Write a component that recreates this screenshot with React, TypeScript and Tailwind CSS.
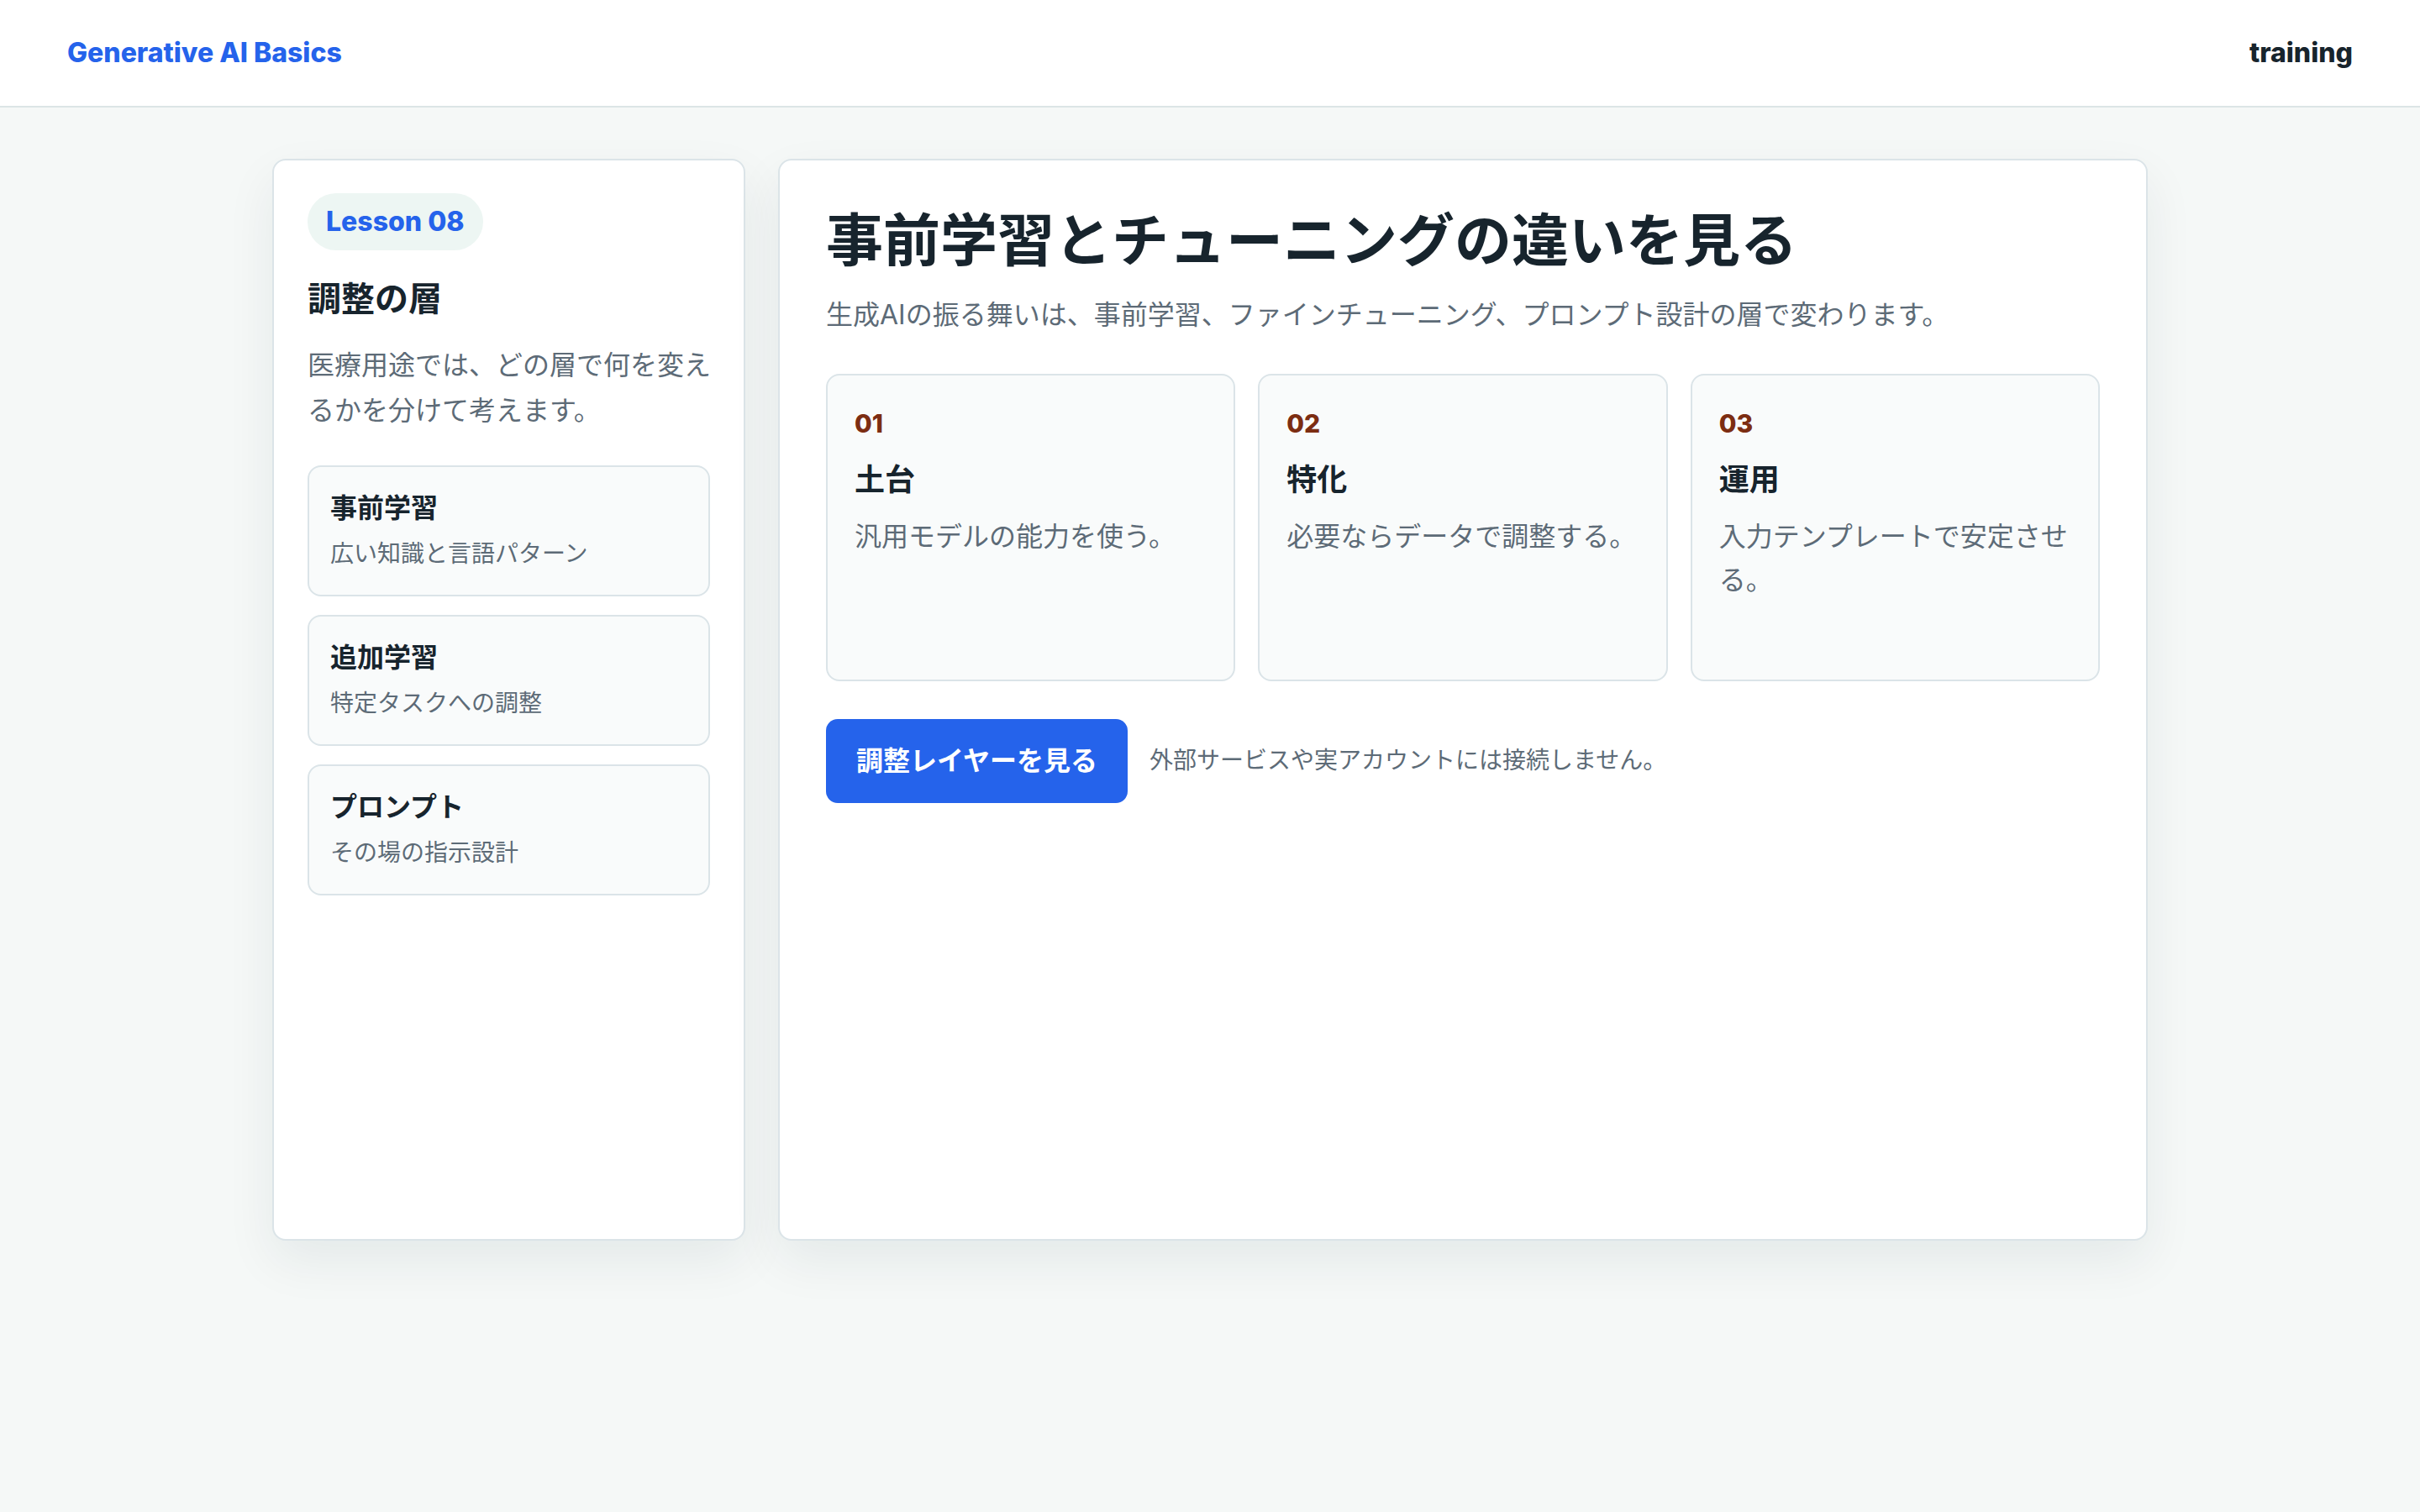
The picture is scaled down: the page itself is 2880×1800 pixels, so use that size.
import React from "react";

const items = [
  { title: "事前学習", sub: "広い知識と言語パターン" },
  { title: "追加学習", sub: "特定タスクへの調整" },
  { title: "プロンプト", sub: "その場の指示設計" },
];

const cards = [
  { num: "01", title: "土台", desc: "汎用モデルの能力を使う。" },
  { num: "02", title: "特化", desc: "必要ならデータで調整する。" },
  { num: "03", title: "運用", desc: "入力テンプレートで安定させる。" },
];

export default function App() {
  return (
    <div className="min-h-screen bg-[#f5f8f7] font-[Inter,'Noto_Sans_CJK_JP',sans-serif] text-[#17242d]">
      <header className="h-[128px] bg-white border-b-2 border-[#dce5e6] flex items-center justify-between px-[80px]">
        <div className="text-[32px] font-extrabold text-[#2563eb] leading-none">Generative AI Basics</div>
        <div className="text-[32px] font-extrabold text-[#17242d] leading-none">training</div>
      </header>

      <main className="w-[2232px] mx-auto pt-[61px] pb-[120px] grid grid-cols-[563px_1fr] gap-[39px]">
        <aside className="min-h-[1288px] bg-white border-2 border-[#dbe4e8] rounded-[16px] shadow-[0_24px_60px_rgba(20,40,50,0.07)] pl-[40px] pr-[38px] pt-[39px]">
          <span className="inline-flex rounded-full bg-[#edf6f3] px-[22px] py-[7px] text-[32px] leading-[1.7] font-extrabold text-[#2563eb]">
            Lesson 08
          </span>
          <h2 className="mt-[32px] text-[40px] leading-[52px] font-bold text-[#17242d]">調整の層</h2>
          <p className="mt-[26px] text-[32px] leading-[53.5px] text-[#5d6b77]">
            医療用途では、どの層で何を変えるかを分けて考えます。
          </p>
          <div className="mt-[39px] mr-[2px] flex flex-col gap-[22px]">
            {items.map((it) => (
              <div
                key={it.title}
                className="border-2 border-[#dbe4e8] rounded-[16px] bg-[#f9fbfb] px-[25px] pt-[29px] pb-[25px]"
              >
                <div className="text-[32px] leading-[40px] font-bold text-[#17242d]">{it.title}</div>
                <div className="mt-[10px] text-[28px] leading-[48px] text-[#5d6b77]">{it.sub}</div>
              </div>
            ))}
          </div>
        </aside>

        <section className="min-h-[1288px] bg-white border-2 border-[#dbe4e8] rounded-[16px] shadow-[0_24px_60px_rgba(20,40,50,0.07)] px-[55px] pt-[55px]">
          <h1 className="text-[68px] leading-[1.2] font-bold text-[#17242d]">
            事前学習とチューニングの違いを見る
          </h1>
          <p className="mt-[20px] text-[32px] leading-[53.5px] text-[#5d6b77]">
            生成AIの振る舞いは、事前学習、ファインチューニング、プロンプト設計の層で変わります。
          </p>

          <div className="mt-[44px] grid grid-cols-3 gap-[27px]">
            {cards.map((c) => (
              <div
                key={c.num}
                className="h-[366px] border-2 border-[#dbe4e8] rounded-[16px] bg-[#f9fbfb] px-[32px] pt-[32px]"
              >
                <div className="text-[30px] leading-[51px] font-extrabold text-[#7c2d12]">{c.num}</div>
                <h3 className="mt-[19px] text-[36px] leading-[45px] font-bold text-[#17242d]">{c.title}</h3>
                <p className="mt-[19px] text-[32px] leading-[52px] text-[#5d6b77]">{c.desc}</p>
              </div>
            ))}
          </div>

          <div className="mt-[45px] flex items-center gap-[26px]">
            <button className="h-[100px] px-[36px] rounded-[14px] bg-[#2563eb] text-white text-[32px] font-bold leading-none">
              調整レイヤーを見る
            </button>
            <span className="text-[28px] leading-[1.7] text-[#5d6b77]">
              外部サービスや実アカウントには接続しません。
            </span>
          </div>
        </section>
      </main>
    </div>
  );
}
